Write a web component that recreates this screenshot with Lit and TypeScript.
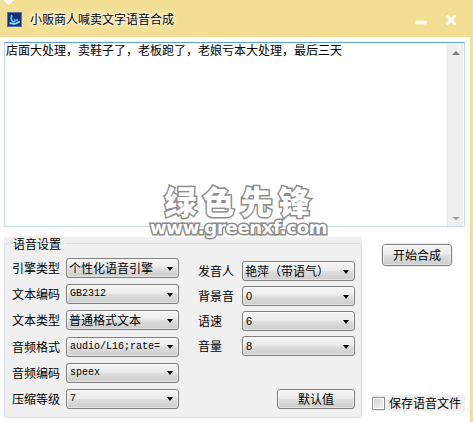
import { LitElement, html, css } from "lit";
import { customElement } from "lit/decorators.js";

@customElement("app-root")
export class AppRoot extends LitElement {
  static styles = css`
    :host { display: block; width: 473px; height: 422px; overflow: hidden; }
    * { box-sizing: border-box; }
    .window {
      position: relative; width: 473px; height: 422px; background: #fff;
      border-right: 3px solid #f3df93; display: flex; flex-direction: column;
      font: 12px/16px "Noto Sans CJK SC", "Liberation Sans", sans-serif; color: #000;
    }
    .titlebar {
      height: 37px; background: #f3df93; display: flex; align-items: center;
      padding: 1px 13px 0 7px; flex: none; position: relative;
    }
    .corner { position: absolute; left: 3px; top: 0; }
    .app-icon { flex: none; display: block; }
    .title { margin-left: 8px; flex: 1; text-shadow: 0 0 4px #fff, 0 0 6px #fff, 0 0 2px rgba(255,255,255,.8); }
    .winbtn { display: block; flex: none; }
    .min { margin-right: 18px; margin-top: 7px; }
    .close { margin-top: 1px; }
    .content { padding: 5px 5px 0 4px; display: flex; flex-direction: column; flex: 1; }
    .memo {
      height: 185px; border: 1px solid #bfdcf0; border-top: 1px solid #5aa2d3;
      display: flex; padding: 0 1px 0 0; background: #fff;
    }
    .memo-text { flex: 1; padding: 0 0 0 1px; line-height: 13px; white-space: nowrap; }
    .scroll {
      width: 16px; margin-top: 1px; background: #efefef; border-left: 1px solid #e6e6e6;
      display: flex; flex-direction: column; justify-content: space-between; align-items: center;
      padding: 7px 0 6px;
    }
    .up { width: 0; height: 0; border: 4px solid transparent; border-top: 0; border-bottom: 4px solid #7d7d7d; }
    .down { width: 0; height: 0; border: 4px solid transparent; border-bottom: 0; border-top: 3px solid #9a9a9a; }
    .bottom { display: flex; gap: 10px; margin-top: 10px; }
    .group { width: 359px; height: 181px; background: #f0f0f0; padding-top: 6px; }
    .box {
      height: 175px; border: 1px solid #d8e0e6; border-radius: 3px;
      display: flex; flex-direction: column; padding: 0 7px;
    }
    .legend { margin: -8px 0 0 1px; padding: 0 4px 0 0; line-height: 16px; align-self: flex-start; background: #f0f0f0; height: 16px; }
    .cols { display: flex; gap: 19px; flex: 1; min-height: 0; padding-bottom: 8px; }
    .col { display: flex; flex-direction: column; }
    .col.left { gap: 6.2px; margin-top: 6px; }
    .col.right { gap: 5px; margin-top: 9px; margin-right: -1px; flex: 1; }
    .row { display: flex; align-items: center; height: 20px; }
    .lbl { white-space: nowrap; }
    .left .lbl { width: 54px; }
    .right .lbl { width: 44px; margin-top: -1px; }
    .combo {
      width: 113px; height: 20px; border: 1px solid #7f7f7f; border-radius: 3px;
      background: linear-gradient(#f5f5f5, #ececec 45%, #dcdcdc 55%, #cdcdcd);
      box-shadow: inset 0 0 0 1px rgba(255,255,255,.45);
      display: flex; align-items: center; justify-content: space-between; padding: 0 5px 0 2px; overflow: hidden;
    }
    .v { white-space: nowrap; overflow: hidden; }
    .v.mono { font: 10px/16px "Liberation Mono", monospace; padding-left: 1px; }
    .v.sans { font: 11px/16px "Liberation Sans", sans-serif; padding-left: 1px; }
    .arrow { flex: none; width: 0; height: 0; border: 3.5px solid transparent; border-bottom: 0; border-top: 4px solid #000; margin-top: 1px; }
    .btn {
      display: flex; align-items: center; justify-content: center; height: 20px;
      border: 1px solid #7f7f7f; border-radius: 3px; padding: 0;
      background: linear-gradient(#f5f5f5, #ececec 45%, #dcdcdc 55%, #cdcdcd);
      box-shadow: inset 0 0 0 1px rgba(255,255,255,.45);
      font: inherit; color: #000;
    }
    .default { width: 78px; margin-top: auto; align-self: flex-end; }
    .side { flex: 1; display: flex; flex-direction: column; justify-content: space-between; padding: 7px 0 7px; }
    .start { width: 70px; height: 22px; margin-left: 10px; outline: 1px solid #f0f0f0; }
    .save { width: 93px; height: 16px; background: #f0f0f0; display: flex; align-items: center; white-space: nowrap; }
    .check {
      width: 13px; height: 13px; border: 1px solid #8f8f8f; margin-right: 4px; flex: none;
      background: linear-gradient(135deg, #d4d4d4, #f4f4f4); box-shadow: inset 0 0 0 1px #fff;
    }
    .wm { position: absolute; left: 150px; top: 182px; width: 175px; pointer-events: none; text-align: center; color: #fff; }
    .wm-cn {
      font: 900 32px/36px "Noto Sans CJK SC", sans-serif; letter-spacing: 6px; margin-right: -6px;
      -webkit-text-stroke: 3px #8c8c8c; paint-order: stroke fill;
    }
    .wm-en {
      font: 700 18px/18px "DejaVu Sans", sans-serif; letter-spacing: -.3px; margin-top: 1px;
      -webkit-text-stroke: 3px #8c8c8c; paint-order: stroke fill; white-space: nowrap;
    }
  `;

  private combo(v: string, kind = "") {
    return html`<div class="combo"><span class="v ${kind}">${v}</span><span class="arrow"></span></div>`;
  }

  private row(label: string, v: string, kind = "") {
    return html`<div class="row"><span class="lbl">${label}</span>${this.combo(v, kind)}</div>`;
  }

  render() {
    return html`
      <div class="window">
        <div class="titlebar">
          <svg class="corner" width="11" height="5" viewBox="0 0 11 5"><path d="M0 0H11L5.5 5Z" fill="#fff"/></svg>
          <svg class="app-icon" width="15" height="15" viewBox="0 0 15 15">
            <rect x=".5" y=".5" width="14" height="14" fill="#17307e" stroke="#5a6fa8"/>
            <path d="M5 3C3.5 6 4 9 6 9.5C8 10 8.5 8 7 7.5" fill="none" stroke="#4fd0ea" stroke-width="1.8"/>
            <path d="M2.5 11.5C5 10.5 7 12.5 9 11.5C10.5 10.8 11.5 9.5 13 10" fill="none" stroke="#7fe4f4" stroke-width="1.8"/>
            <circle cx="10" cy="8" r="1" fill="#4fd0ea"/>
          </svg>
          <span class="title">小贩商人喊卖文字语音合成</span>
          <svg class="winbtn min" width="12" height="5" viewBox="0 0 12 5"><rect x="0" y="0.5" width="12" height="4" rx="1" fill="#fbf3d2"/><rect x="1" y="1.5" width="10" height="2" fill="#fff"/></svg>
          <svg class="winbtn close" width="12" height="12" viewBox="0 0 12 12"><path d="M1.5 1.5L10.5 10.5M10.5 1.5L1.5 10.5" stroke="#fff" stroke-width="2.6"/></svg>
        </div>
        <div class="content">
          <div class="memo">
            <div class="memo-text">店面大处理，卖鞋子了，老板跑了，老娘亏本大处理，最后三天</div>
            <div class="scroll"><span class="up"></span><span class="down"></span></div>
          </div>
          <div class="bottom">
            <div class="group">
              <div class="box">
                <div class="legend">语音设置</div>
                <div class="cols">
                  <div class="col left">
                    ${this.row("引擎类型", "个性化语音引擎")}
                    ${this.row("文本编码", "GB2312", "mono")}
                    ${this.row("文本类型", "普通格式文本")}
                    ${this.row("音频格式", "audio/L16;rate=", "mono")}
                    ${this.row("音频编码", "speex", "mono")}
                    ${this.row("压缩等级", "7", "mono")}
                  </div>
                  <div class="col right">
                    ${this.row("发音人", "艳萍（带语气）")}
                    ${this.row("背景音", "0", "sans")}
                    ${this.row("语速", "6", "sans")}
                    ${this.row("音量", "8", "sans")}
                    <button class="btn default">默认值</button>
                  </div>
                </div>
              </div>
            </div>
            <div class="side">
              <button class="btn start">开始合成</button>
              <label class="save"><span class="check"></span>保存语音文件</label>
            </div>
          </div>
        </div>
        <div class="wm">
          <div class="wm-cn">绿色先锋</div>
          <div class="wm-en">www.greenxf.com</div>
        </div>
      </div>
    `;
  }
}
